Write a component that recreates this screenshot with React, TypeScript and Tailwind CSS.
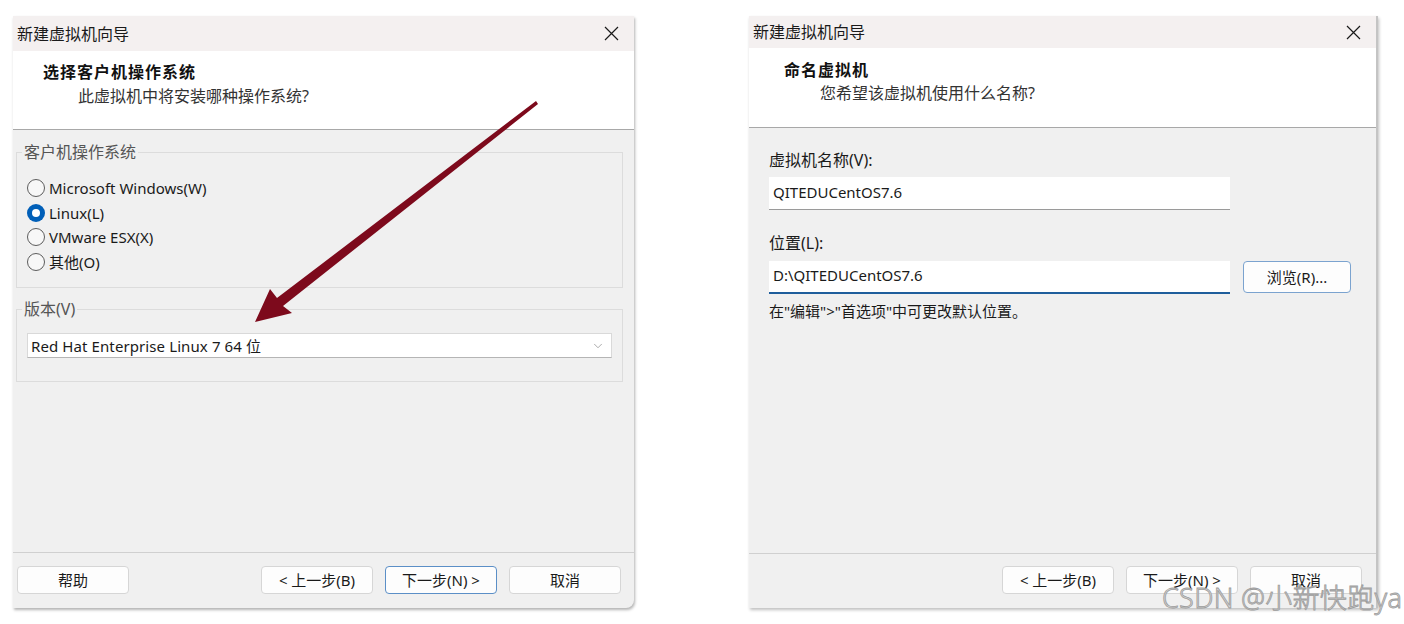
import { ChevronDown } from "lucide-react";

const sans = "font-['Segoe_UI','Noto_Sans','Noto_Sans_CJK_SC',sans-serif]";

function CloseX() {
	return (
		<svg width="15" height="15" viewBox="0 0 15 15" className="text-[#1a1a1a]">
			<path d="M1 1 L14 14 M14 1 L1 14" stroke="currentColor" strokeWidth="1.2" />
		</svg>
	);
}

function Radio({ label, checked }: { label: string; checked?: boolean }) {
	return (
		<div className="h-[24.6px] flex items-center gap-[4px]">
			{checked ? (
				<span className="w-[18px] h-[18px] rounded-full bg-[#005fb8] flex items-center justify-center">
					<span className="w-[8px] h-[8px] rounded-full bg-white" />
				</span>
			) : (
				<span className="w-[18px] h-[18px] rounded-full border border-[#5c5c5c] bg-[#f7f7f7]" />
			)}
			<span className="text-[15px] text-[#1a1a1a]">{label}</span>
		</div>
	);
}

function Btn({ children, primary }: { children: React.ReactNode; primary?: boolean }) {
	return (
		<button
			type="button"
			className={
				"w-[112px] h-[28px] rounded-[4px] bg-[#fdfdfd] text-[15px] text-[#1a1a1a] flex items-center justify-center border " +
				(primary ? "border-[#5b8fc7]" : "border-[#d6d6d6]")
			}
		>
			{children}
		</button>
	);
}

function TitleBar({ h }: { h: string }) {
	return (
		<div className={`${h} bg-[#f4f0f0] flex items-center justify-between pl-[4px] pr-[15px]`}>
			<span className="text-[16px] text-[#1a1a1a]">新建虚拟机向导</span>
			<CloseX />
		</div>
	);
}

export default function App() {
	return (
		<div className={`relative w-[1404px] h-[624px] bg-white flex items-start overflow-hidden ${sans}`}>
			{/* left: 选择客户机操作系统 */}
			<div className="ml-[13px] mt-[16px] w-[621px] h-[592px] flex flex-col bg-[#f0f0f0] rounded-br-[8px] shadow-[1px_2px_3px_rgba(0,0,0,0.3)] overflow-hidden">
				<TitleBar h="h-[35px]" />
				<div className="h-[79px] bg-white border-b border-[#a8a8a8] pl-[30px] pt-[10px]">
					<div className="text-[16px] font-bold leading-[22px] tracking-[1px] text-[#111]">选择客户机操作系统</div>
					<div className="pl-[35px] mt-[2px] text-[16px] leading-[22px] text-[#333]">此虚拟机中将安装哪种操作系统?</div>
				</div>
				<div className="flex-1 pt-[12px] ml-[3px] mr-[11px]">
					<fieldset className="border border-[#dcdcdc] pl-[5px] pb-[13px]">
						<legend className="px-[2px] text-[16px] leading-[20px] text-[#555]">客户机操作系统</legend>
						<div className="mt-[14px] ml-[5px] flex flex-col">
							<Radio label="Microsoft Windows(W)" />
							<Radio label="Linux(L)" checked />
							<Radio label="VMware ESX(X)" />
							<Radio label="其他(O)" />
						</div>
					</fieldset>
					<fieldset className="mt-[11px] border border-[#dcdcdc] pl-[5px] pb-[23px]">
						<legend className="px-[2px] text-[16px] leading-[20px] text-[#555]">版本(V)</legend>
						<div className="mt-[14px] ml-[5px] mr-[10px] h-[25px] bg-white border border-[#d9d9d9] border-b-[#b5b5b5] flex items-center justify-between pl-[3px] pr-[6px]">
							<span className="text-[15px] tracking-[0.1px] text-[#1a1a1a]">Red Hat Enterprise Linux 7 64 位</span>
							<ChevronDown size={14} strokeWidth={1.2} className="text-[#888]" />
						</div>
					</fieldset>
				</div>
				<div className="h-[56px] border-t border-[#d0d0d0] flex items-start pt-[13px] pl-[4px] pr-[13px]">
					<Btn>帮助</Btn>
					<div className="flex-1" />
					<div className="flex gap-[12px]">
						<Btn>&lt; 上一步(B)</Btn>
						<Btn primary>下一步(N) &gt;</Btn>
						<Btn>取消</Btn>
					</div>
				</div>
			</div>

			{/* right: 命名虚拟机 */}
			<div className="ml-[115px] mt-[16px] w-[629px] h-[592px] flex flex-col bg-[#f0f0f0] border-r-[2px] border-[#c4c4c4] shadow-[1px_2px_3px_rgba(0,0,0,0.25)]">
				<TitleBar h="h-[32px]" />
				<div className="h-[80px] bg-white border-b border-[#a8a8a8] pl-[35px] pt-[11px]">
					<div className="text-[16px] font-bold leading-[22px] tracking-[1px] text-[#111]">命名虚拟机</div>
					<div className="pl-[36px] mt-[1px] text-[16px] leading-[22px] text-[#333]">您希望该虚拟机使用什么名称?</div>
				</div>
				<div className="flex-1 pl-[20px] pt-[22px] flex flex-col">
					<div className="text-[16px] leading-[20px] text-[#1a1a1a]">虚拟机名称(V):</div>
					<div className="mt-[7px] w-[461px] h-[33px] bg-white border-b border-[#9a9a9a] flex items-center pl-[4px] pb-[2px] text-[15px] text-[#1a1a1a]">
						QITEDUCentOS7.6
					</div>
					<div className="mt-[23px] text-[16px] leading-[20px] text-[#1a1a1a]">位置(L):</div>
					<div className="mt-[8px] flex items-start gap-[13px]">
						<div className="w-[461px] h-[33px] bg-white border-b-[2px] border-[#1f5e9c] flex items-center pl-[4px] pb-[2px] text-[15px] text-[#1a1a1a]">
							D:\QITEDUCentOS7.6
						</div>
						<button
							type="button"
							className="w-[108px] h-[32px] rounded-[4px] bg-[#fdfdfd] border border-[#7ba3cf] text-[15px] text-[#1a1a1a] flex items-center justify-center"
						>
							浏览(R)...
						</button>
					</div>
					<div className="mt-[7px] text-[15px] leading-[20px] text-[#1a1a1a]">在"编辑"&gt;"首选项"中可更改默认位置。</div>
				</div>
				<div className="h-[55px] border-t border-[#d0d0d0] flex justify-end gap-[12px] pt-[12px] pr-[14px]">
					<Btn>&lt; 上一步(B)</Btn>
					<Btn>下一步(N) &gt;</Btn>
					<Btn>取消</Btn>
				</div>
			</div>

			{/* arrow drawn over the left dialog */}
			<svg className="absolute left-0 top-0 pointer-events-none" width="1404" height="624">
				<polygon
					points="536,101 277,298 270,289 255,322 292,313 283,306 538,104"
					fill="#7d0a1c"
				/>
			</svg>

			{/* watermark */}
			<div className="absolute left-[1162px] top-[581px] text-[27px] leading-[34px] tracking-[0.3px] text-[#d6d6d6] [-webkit-text-stroke:0.8px_#9c9c9c] font-['Noto_Sans','Noto_Sans_CJK_SC',sans-serif] font-light pointer-events-none whitespace-nowrap">
				CSDN @小新快跑ya
			</div>
		</div>
	);
}
